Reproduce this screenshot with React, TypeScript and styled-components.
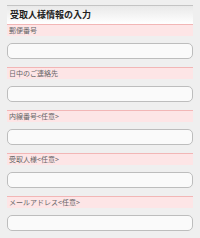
import * as React from 'react';
import styled, { createGlobalStyle } from 'styled-components';

var GlobalStyle = createGlobalStyle`
	html, body {
		margin: 0;
		padding: 0;
		background: #efefef;
		font-family: "Noto Sans CJK JP", "DejaVu Sans", sans-serif;
	}
`;

var fields = ['郵便番号', '日中のご連絡先', '内線番号<任意>', '受取人様<任意>', 'メールアドレス<任意>'];

export default function App() {
	return (
		<>
			<GlobalStyle />
			<Page>
				<Heading>受取人様情報の入力</Heading>
				{fields.map((label, i) => (
					<Field key={label} first={i === 0}>
						<Label>{label}</Label>
						<Input type='text' />
					</Field>
				))}
			</Page>
		</>
	);
}

var Page = styled.div`
	padding: 5px 7px 0;
	display: flex;
	flex-direction: column;
`;

var Heading = styled.h2`
	margin: 0;
	height: 18px;
	padding: 0 3px;
	border-top: 1px solid #c4c4c4;
	background: linear-gradient(#e9e9e9, #ffffff);
	font-size: 9px;
	font-weight: bold;
	line-height: 18px;
	color: #222;
`;

var Field = styled.div<{ first?: boolean }>`
	display: flex;
	flex-direction: column;
	gap: 7px;
	margin-top: ${(p) => (p.first ? '0' : '8px')};
`;

var Label = styled.div`
	height: 11px;
	padding: 0 2px;
	border-top: 1px solid #f2b6b6;
	background: #fde5e6;
	font-size: 7px;
	line-height: 11px;
	color: #666;
	white-space: nowrap;
`;

var Input = styled.input`
	box-sizing: border-box;
	width: 100%;
	height: 16px;
	margin: 0;
	border: 1px solid #bdbdbd;
	border-radius: 5px;
	background: #fafafa;
	outline: none;
`;
